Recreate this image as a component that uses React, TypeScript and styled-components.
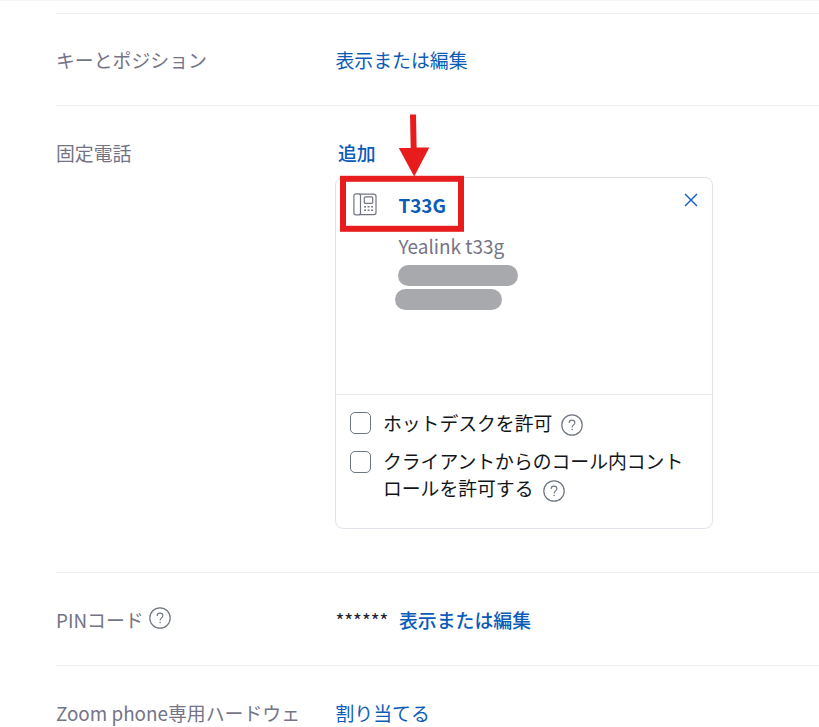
import React from 'react';
import styled, { createGlobalStyle } from 'styled-components';

const GlobalStyle = createGlobalStyle`
  * { box-sizing: border-box; }
  html, body { margin: 0; background: #fff; overflow: hidden; }
  body {
    font-family: "Noto Sans CJK JP", "Noto Sans", sans-serif;
    font-size: 18.87px;
    line-height: 28px;
    color: #131619;
  }
`;

const Page = styled.main`
  width: 100%;
  height: 727px;
  overflow: hidden;
  border-top: 1px solid #f7f7f8;
  padding: 12px 0 0 56px;
`;

const Row = styled.section<{ $height: number; $top?: number }>`
  display: grid;
  grid-template-columns: 279px 1fr;
  align-items: start;
  height: ${(p) => p.$height}px;
  padding-top: ${(p) => p.$top ?? 33}px;
  border-top: 1px solid #ededf1;
  white-space: nowrap;
`;

const Label = styled.div`
  display: flex;
  gap: 5px;
  color: #747487;
`;

const Value = styled.div`
  display: flex;
  padding-left: 0.5px;
`;

const Link = styled.a<{ $weight?: number }>`
  color: #0b5bb9;
  font-weight: ${(p) => p.$weight ?? 400};
  text-decoration: none;
  cursor: pointer;
`;

const Mask = styled.span`
  width: 63.5px;
  color: #232333;
`;

const Phones = styled.div`
  position: relative;
`;

const AddLine = styled.div`
  height: 38px;
  padding-left: 3px;
`;

const Card = styled.article`
  width: 378px;
  height: 352px;
  border: 1px solid #e2e2ec;
  border-radius: 8px;
`;

const Device = styled.div`
  display: grid;
  grid-template-columns: 45px 1fr 14px;
  height: 217px;
  padding: 14px 14px 0 17px;
  border-bottom: 1px solid #e6e6ee;
`;

const DeviceInfo = styled.div`
  display: flex;
  flex-direction: column;
  align-items: flex-start;
  margin-top: -1px;
  padding-left: 0.4px;
`;

const Model = styled.div`
  margin: 13px 0 5.6px;
  color: #747487;
  font-size: 18.95px;
  line-height: 27px;
`;

const Redacted = styled.span<{ $width: number; $shift: number }>`
  width: ${(p) => p.$width}px;
  height: 21px;
  margin: 0 0 3px ${(p) => p.$shift}px;
  border-radius: 11px;
  background: #a7a9ac;
`;

const Options = styled.div`
  padding: 14px 14px 0;
`;

const Option = styled.label`
  display: grid;
  grid-template-columns: 33px 1fr;
  margin-bottom: 11px;
  line-height: 27px;
  font-size: 18.82px;
`;

const Checkbox = styled.input<{ $top?: number }>`
  appearance: none;
  width: 21px;
  height: 22px;
  margin: ${(p) => p.$top ?? 3}px 0 0;
  border: 1px solid #6e7680;
  border-radius: 5px;
  background: #fff;
`;

const OptionLine = styled.span`
  display: flex;
  gap: 9px;
`;

const HelpSvg = styled.svg<{ $top: number }>`
  display: block;
  flex: none;
  margin-top: ${(p) => p.$top}px;
`;

const PhoneSvg = styled.svg`
  display: block;
`;

const CloseSvg = styled.svg`
  display: block;
  margin-top: 1px;
`;

const Callout = styled.svg`
  position: absolute;
  left: 4px;
  top: -25px;
  pointer-events: none;
`;

const Help = ({ top }: { top: number }) => (
  <HelpSvg $top={top} width="22" height="22" viewBox="0 0 22 22" fill="none" stroke="#6e7680">
    <circle cx="11" cy="11" r="10.2" strokeWidth="1.2" />
    <path d="M8.1 8.9C8.1 7.1 9.3 6.1 11 6.1s2.9 1.1 2.9 2.6c0 2.2-2.8 2.1-2.8 4.7" strokeWidth="1.1" />
    <circle cx="11.1" cy="15.6" r=".75" fill="#6e7680" stroke="none" />
  </HelpSvg>
);

const PhoneIcon = () => (
  <PhoneSvg width="24" height="24" viewBox="0 0 24 24" fill="none" stroke="#747487" strokeWidth="1.2">
    <path d="M6 2.2h15a2 2 0 0 1 2 2v16.4a2 2 0 0 1-2 2H6" />
    <rect x="0.9" y="1.8" width="6.6" height="21" rx="2" />
    <rect x="11.3" y="4.9" width="8.4" height="6.4" rx="1" />
    <path d="M11.1 14.8H13m1.6 0h1.9m1.6 0H20M11.1 18.3H13m1.6 0h1.9m1.6 0H20" strokeWidth="1.6" />
  </PhoneSvg>
);

export default function App() {
  return (
    <>
      <GlobalStyle />
      <Page>
        <Row $height={92} $top={32}>
          <Label>キーとポジション</Label>
          <Value><Link>表示または編集</Link></Value>
        </Row>
        <Row $height={467}>
          <Label>固定電話</Label>
          <Phones>
            <AddLine><Link $weight={500}>追加</Link></AddLine>
            <Card>
              <Device>
                <PhoneIcon />
                <DeviceInfo>
                  <Link $weight={700}>T33G</Link>
                  <Model>Yealink t33g</Model>
                  <Redacted $width={120} $shift={0} />
                  <Redacted $width={107} $shift={-3} />
                </DeviceInfo>
                <CloseSvg width="14" height="14" viewBox="0 0 14 14" stroke="#0b5bb9" strokeWidth="1.4">
                  <path d="M1 1l12 12M13 1L1 13" />
                </CloseSvg>
              </Device>
              <Options>
                <Option>
                  <Checkbox type="checkbox" />
                  <OptionLine>ホットデスクを許可<Help top={5} /></OptionLine>
                </Option>
                <Option>
                  <Checkbox type="checkbox" $top={4} />
                  <div>
                    <OptionLine>クライアントからのコール内コント</OptionLine>
                    <OptionLine>ロールを許可する<Help top={6} /></OptionLine>
                  </div>
                </Option>
              </Options>
            </Card>
            <Callout width="126" height="120" viewBox="0 0 126 120">
              <rect x="4" y="64.8" width="118" height="50" fill="none" stroke="#e81c1c" strokeWidth="6" />
              <path d="M71 .5h6l.6 33h12.7L75.2 62.5 59.8 34h11.9z" fill="#e81c1c" />
            </Callout>
          </Phones>
        </Row>
        <Row $height={93}>
          <Label>PINコード<Help top={1} /></Label>
          <Value><Mask>******</Mask><Link $weight={500}>表示または編集</Link></Value>
        </Row>
        <Row $height={93}>
          <Label>Zoom phone専用ハードウェ</Label>
          <Value><Link>割り当てる</Link></Value>
        </Row>
      </Page>
    </>
  );
}
